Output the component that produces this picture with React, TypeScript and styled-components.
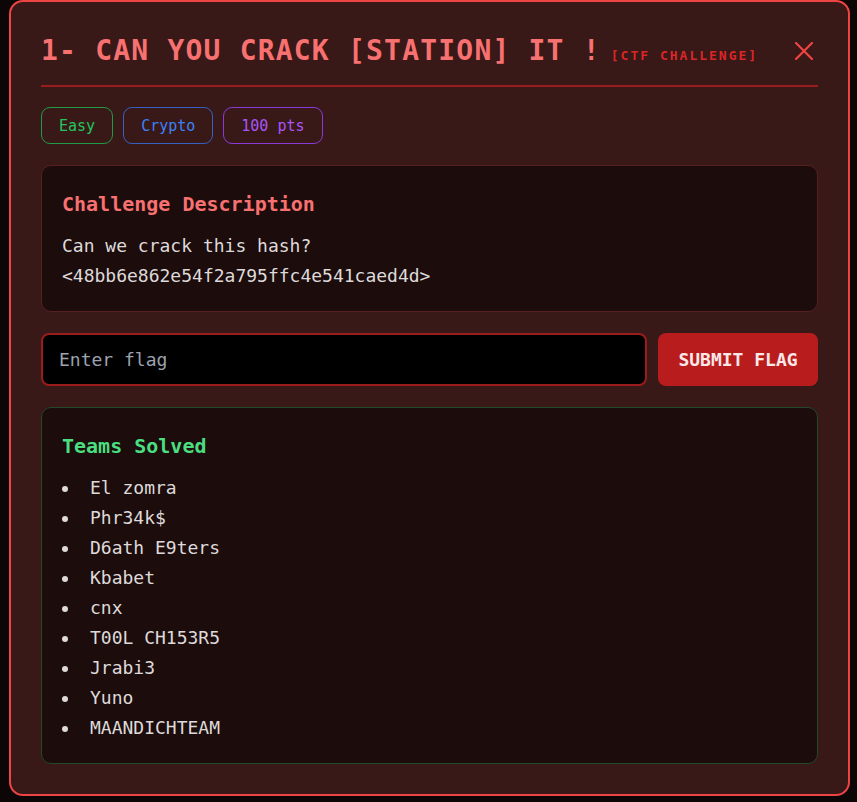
import React from "react";
import styled, { createGlobalStyle } from "styled-components";

const GlobalStyle = createGlobalStyle`
  html, body {
    margin: 0;
    padding: 0;
    background: #0d0606;
  }
  * {
    box-sizing: border-box;
  }
`;

const mono = `"DejaVu Sans Mono", "Liberation Mono", monospace`;

const teams = [
  "El zomra",
  "Phr34k$",
  "D6ath E9ters",
  "Kbabet",
  "cnx",
  "T00L CH153R5",
  "Jrabi3",
  "Yuno",
  "MAANDICHTEAM",
];

type Tone = "green" | "blue" | "purple";

const tones: Record<Tone, { border: string; text: string }> = {
  green: { border: "#1f9a45", text: "#22c55e" },
  blue: { border: "#3460c4", text: "#3b82f6" },
  purple: { border: "#8a3ad6", text: "#a855f7" },
};

export default function App() {
  return (
    <>
      <GlobalStyle />
      <Backdrop>
        <Modal>
          <Header>
            <Title>
              1- CAN YOU CRACK [STATION] IT !<Tag>[CTF CHALLENGE]</Tag>
            </Title>
            <CloseButton aria-label="Close">
              <svg width="18" height="18" viewBox="0 0 18 18" fill="none">
                <path
                  d="M1 1L17 17M17 1L1 17"
                  stroke="#ef4444"
                  strokeWidth="2.2"
                  strokeLinecap="round"
                />
              </svg>
            </CloseButton>
          </Header>

          <Badges>
            <Badge $tone="green">Easy</Badge>
            <Badge $tone="blue">Crypto</Badge>
            <Badge $tone="purple">100 pts</Badge>
          </Badges>

          <Card $border="#57201f">
            <CardTitle $color="#f87171">Challenge Description</CardTitle>
            <CardText>
              Can we crack this hash?
              <br />
              &lt;48bb6e862e54f2a795ffc4e541caed4d&gt;
            </CardText>
          </Card>

          <FlagRow>
            <FlagInput placeholder="Enter flag" />
            <SubmitButton>SUBMIT FLAG</SubmitButton>
          </FlagRow>

          <Card $border="#21492a">
            <CardTitle $color="#4ade80">Teams Solved</CardTitle>
            <TeamList>
              {teams.map((t) => (
                <TeamItem key={t}>{t}</TeamItem>
              ))}
            </TeamList>
          </Card>
        </Modal>
      </Backdrop>
    </>
  );
}

const Backdrop = styled.div`
  min-height: 802px;
  padding: 0 7px 7px 9px;
  background: #0d0606;
`;

const Modal = styled.div`
  width: 841px;
  background: #391818;
  border: 2px solid #ef4444;
  border-radius: 14px;
  padding: 30px;
  display: flex;
  flex-direction: column;
  gap: 21px;
  font-family: ${mono};
`;

const Header = styled.div`
  display: flex;
  align-items: center;
  justify-content: space-between;
  padding-bottom: 15px;
  border-bottom: 2px solid #9b1c1c;
  margin-bottom: -1px;
`;

const Title = styled.h2`
  margin: 0;
  font-size: 28px;
  line-height: 38px;
  font-weight: 700;
  letter-spacing: 1.2px;
  color: #f87171;
`;

const Tag = styled.span`
  margin-left: 10px;
  font-size: 13px;
  line-height: 1;
  font-weight: 700;
  letter-spacing: 2px;
  color: #dc2626;
`;

const CloseButton = styled.button`
  width: 28px;
  height: 28px;
  padding: 0;
  border: none;
  background: transparent;
  display: flex;
  align-items: center;
  justify-content: center;
  cursor: pointer;
`;

const Badges = styled.div`
  display: flex;
  gap: 10px;
`;

const Badge = styled.span<{ $tone: Tone }>`
  height: 37px;
  display: inline-flex;
  align-items: center;
  padding: 0 17px;
  border: 1px solid ${(p) => tones[p.$tone].border};
  border-radius: 9px;
  font-size: 15px;
  color: ${(p) => tones[p.$tone].text};
`;

const Card = styled.section<{ $border: string }>`
  background: #1c0c0c;
  border: 1px solid ${(p) => p.$border};
  border-radius: 10px;
  padding: 24px 20px 20px;
`;

const CardTitle = styled.h3<{ $color: string }>`
  margin: 0 0 13px;
  font-size: 20px;
  line-height: 28px;
  font-weight: 700;
  color: ${(p) => p.$color};
`;

const CardText = styled.p`
  margin: 0;
  font-size: 18px;
  line-height: 30px;
  color: #dedada;
`;

const FlagRow = styled.div`
  display: flex;
  gap: 11px;
  height: 53px;
`;

const FlagInput = styled.input`
  flex: 1;
  min-width: 0;
  height: 100%;
  background: #000;
  border: 2px solid #9b1c1c;
  border-radius: 8px;
  padding: 0 16px;
  font-family: ${mono};
  font-size: 18px;
  color: #e5e5e5;
  outline: none;

  &::placeholder {
    color: #9ca3af;
  }
`;

const SubmitButton = styled.button`
  width: 160px;
  height: 100%;
  background: #b91c1c;
  border: none;
  border-radius: 8px;
  font-family: ${mono};
  font-size: 18px;
  font-weight: 700;
  color: #fde8e8;
  cursor: pointer;
`;

const TeamList = styled.ul`
  margin: 0;
  padding: 0;
  list-style: none;
`;

const TeamItem = styled.li`
  display: flex;
  align-items: center;
  font-size: 18px;
  line-height: 30px;
  color: #dedada;

  &::before {
    content: "";
    width: 6px;
    height: 6px;
    border-radius: 50%;
    background: #dedada;
    margin: 2px 22px 0 0;
    flex-shrink: 0;
  }
`;
